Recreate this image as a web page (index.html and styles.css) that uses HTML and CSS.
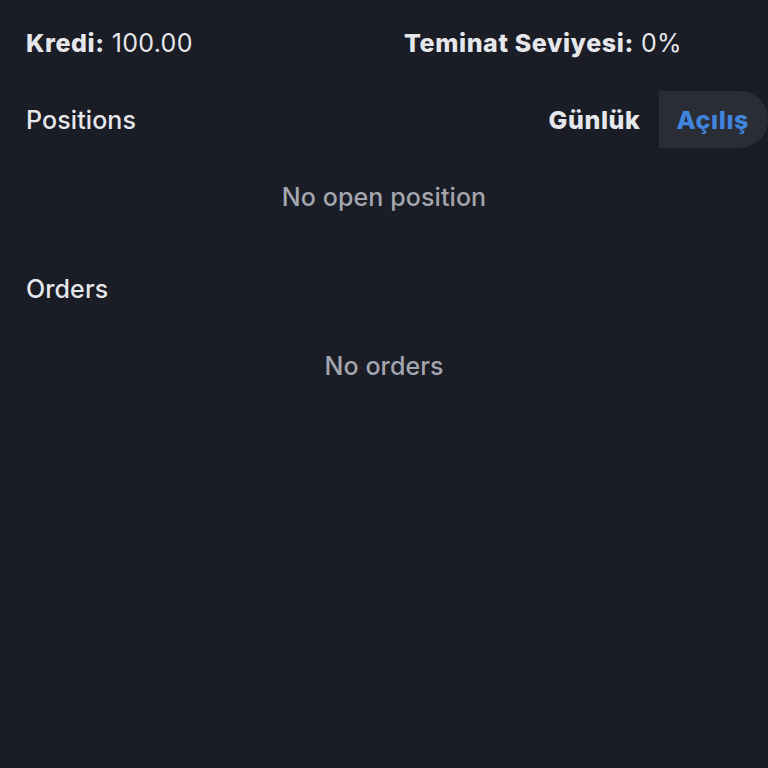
FILE: index.html
```html
<!DOCTYPE html>
<html lang="tr">
<head>
<meta charset="utf-8">
<link rel="stylesheet" href="styles.css">
</head>
<body>
<div class="page">
  <div class="stats">
    <div class="stat"><span class="label">Kredi:</span> <span class="value">100.00</span></div>
    <div class="stat stat-right"><span class="label">Teminat Seviyesi:</span> <span class="value">0%</span></div>
  </div>
  <div class="section-head">
    <div class="section-title">Positions</div>
    <div class="tabs">
      <div class="tab">Günlük</div>
      <div class="tab active">Açılış</div>
    </div>
  </div>
  <div class="empty">No open position</div>
  <div class="section-head orders-head">
    <div class="section-title">Orders</div>
  </div>
  <div class="empty">No orders</div>
</div>
</body>
</html>
```
FILE: styles.css
```css
html, body {
  margin: 0;
  padding: 0;
  background: #1a1c26;
}
body {
  font-family: Inter, "Open Sans", sans-serif;
  color: #e6e7eb;
  width: 768px;
  height: 768px;
  overflow: hidden;
}
.page {
  display: flex;
  flex-direction: column;
}
.stats {
  display: grid;
  grid-template-columns: 378px 1fr;
  padding: 27px 26px 0 26px;
  height: 32px;
  align-items: center;
  font-size: 25px;
}
.label {
  font-weight: 800;
  letter-spacing: 0.6px;
}
.value {
  font-weight: 400;
  letter-spacing: 0.3px;
}
.section-head {
  display: flex;
  align-items: center;
  justify-content: space-between;
  margin-top: 32px;
  height: 57px;
  padding-left: 26px;
}
.section-title {
  font-size: 25px;
  font-weight: 500;
  letter-spacing: 0.1px;
}
.tabs {
  display: flex;
  align-items: stretch;
  height: 57px;
}
.tab {
  display: flex;
  align-items: center;
  padding: 0 18px;
  font-size: 25px;
  font-weight: 800;
  letter-spacing: 0.6px;
  color: #e6e7eb;
}
.tab.active {
  background: #2a2d36;
  color: #4085dd;
  border-radius: 0 28px 28px 0;
  padding: 0 19px 0 18px;
}
.empty {
  text-align: center;
  font-size: 25px;
  font-weight: 500;
  color: #a3a6ae;
  margin-top: 33px;
  height: 32px;
  line-height: 32px;
  letter-spacing: 0.1px;
}
.orders-head {
  margin-top: 47px;
}
```
